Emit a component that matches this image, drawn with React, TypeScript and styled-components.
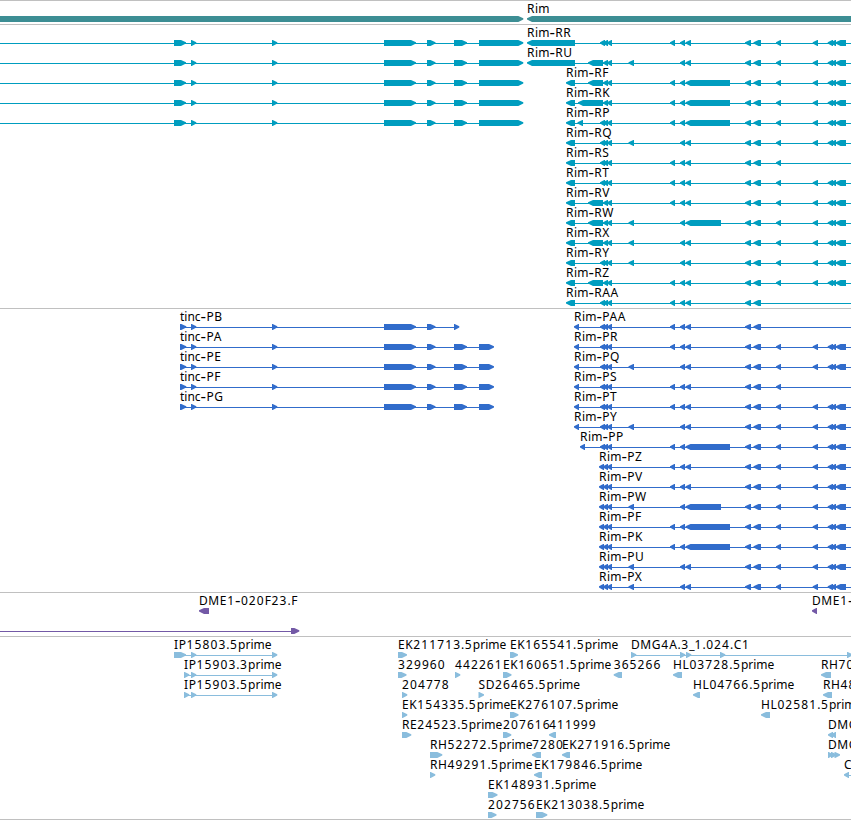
import React from 'react'
import styled, { createGlobalStyle } from 'styled-components'

type Span = [number, number]

type Feature = {
  label?: string
  at?: number
  dir: 'left' | 'right'
  line?: Span
  parts: Span[]
}

type Row = Feature[]

const WIDTH = 851

const colors = {
  gene: '#3d8e94',
  transcript: '#009dbf',
  protein: '#316ccb',
  clone: '#7359a6',
  est: '#8abddd',
}

// exons shared by most of the Rim isoforms
const utr: Span = [566, 575]
const triple: Span[] = [[600, 605], [603, 608], [607, 612]]
const long5: Span[] = [[588, 603], [603, 608], [607, 612]]
const longer5: Span[] = [[578, 603], [603, 608], [607, 612]]
const coding: Span[] = [[599, 604], [603, 608], [607, 612]]
const alt: Span = [628.5, 634]
const e1: Span = [670, 675]
const e2: Span = [680, 685]
const e3: Span = [685.5, 691]
const mid: Span = [685.5, 721]
const big: Span = [685.5, 730]
const pair: Span[] = [[745, 751], [753.5, 761]]
const e4: Span = [776, 781]
const tail: Span[] = [...pair, e4, [812.7, 818], [827.7, 833], [831, 836], [835.5, 846]]

const rim = (name: string, ...parts: Span[]): Feature => ({
  label: `Rim-${name}`,
  at: parts[0][0],
  dir: 'left',
  line: [parts[0][0] + 2, WIDTH],
  parts,
})

const tincExons: Span[] = [[191, 196.3], [272, 277.3], [384, 416], [427, 435.5]]

const tincR: Feature = {
  dir: 'right',
  line: [0, 520],
  parts: [[174, 186], ...tincExons, [454, 467], [479, 523.3]],
}

const tincP = (name: string, ...end: Span[]): Feature => ({
  label: `tinc-${name}`,
  at: 180,
  dir: 'right',
  line: [180, end[end.length - 1][1] - 2],
  parts: [[180, 186.3], ...tincExons, ...end],
})

const est = (label: string, from: number, to: number, dir: Feature['dir'] = 'right'): Feature => ({
  label,
  at: from,
  dir,
  parts: [[from, to]],
})

const ip = (label: string, from: number, to: number): Feature => ({
  label,
  at: from,
  dir: 'right',
  line: [from, 275],
  parts: [[from, to], [191, 196.3], [272, 277.3]],
})

const genes: Row[] = [
  [
    { dir: 'right', parts: [[-10, 523.3]] },
    { label: 'Rim', at: 527, dir: 'left', parts: [[527, 870]] },
  ],
]

const transcripts: Row[] = [
  [tincR, rim('RR', [527, 575], ...triple, e1, e2, e3, ...tail)],
  [tincR, rim('RU', [527, 575], ...long5, alt, e2, e3, ...tail)],
  [tincR, rim('RF', utr, ...long5, e1, e2, big, ...tail)],
  [tincR, rim('RK', utr, ...longer5, e1, e2, big, ...tail)],
  [tincR, rim('RP', utr, [577.5, 583], ...triple, e1, e2, big, ...tail)],
  [rim('RQ', utr, ...triple, alt, e2, e3, ...tail)],
  [rim('RS', utr, ...triple, e1, e2, e3, ...pair, e4)],
  [rim('RT', utr, ...triple, e1, e2, e3, ...tail)],
  [rim('RV', utr, ...long5, e1, e2, e3, ...tail)],
  [rim('RW', utr, ...long5, alt, e2, mid, ...tail)],
  [rim('RX', utr, ...long5, alt, e2, e3, ...tail)],
  [rim('RY', utr, ...triple, alt, e2, e3, ...tail)],
  [rim('RZ', utr, ...long5, e1, e2, e3, ...tail)],
  [rim('RAA', utr, ...triple, e1, e2, e3, ...pair)],
]

const start: Span = [574, 579]
const tincEnd: Span[] = [[454, 467], [479, 494]]

const proteins: Row[] = [
  [tincP('PB', [454, 459.3]), rim('PAA', start, ...triple, e1, e2, e3, ...pair)],
  [tincP('PA', ...tincEnd), rim('PR', start, ...triple, e1, e2, e3, ...tail)],
  [tincP('PE', ...tincEnd), rim('PQ', start, ...triple, alt, e2, e3, ...tail)],
  [tincP('PF', ...tincEnd), rim('PS', start, ...triple, e1, e2, e3, ...pair, e4)],
  [tincP('PG', ...tincEnd), rim('PT', start, ...triple, e1, e2, e3, ...tail)],
  [rim('PY', start, ...triple, alt, e2, e3, ...tail)],
  [rim('PP', [580, 585], ...triple, e1, e2, big, ...tail)],
  [rim('PZ', ...coding, e1, e2, e3, ...tail)],
  [rim('PV', ...coding, e1, e2, e3, ...tail)],
  [rim('PW', ...coding, alt, e2, mid, ...tail)],
  [rim('PF', ...coding, e1, e2, big, ...tail)],
  [rim('PK', ...coding, e1, e2, big, ...tail)],
  [rim('PU', ...coding, alt, e2, e3, ...tail)],
  [rim('PX', ...coding, alt, e2, e3, ...tail)],
]

const clones: Row[] = [
  [est('DME1-020F23.F', 199, 209, 'left'), est('DME1-', 812, 817, 'left')],
  [{ dir: 'right', line: [0, 296], parts: [[291, 299.3]] }],
]

const ests: Row[] = [
  [
    ip('IP15803.5prime', 174, 186),
    est('EK211713.5prime', 398, 407),
    est('EK165541.5prime', 510, 518),
    {
      label: 'DMG4A.3_1.024.C1',
      at: 631,
      dir: 'right',
      line: [631, WIDTH],
      parts: [[631, 636.3], [680, 685.3], [686, 691.3], [720, 725.3], [847, 852.3]],
    },
  ],
  [
    ip('IP15903.3prime', 184, 189.3),
    est('329960', 398, 406.5),
    est('442261', 455, 460.3),
    est('EK160651.5prime', 503, 511.5),
    est('365266', 613.7, 622, 'left'),
    est('HL03728.5prime', 673, 682, 'left'),
    est('RH70', 821, 831, 'left'),
  ],
  [
    ip('IP15903.5prime', 184, 189.3),
    est('204778', 402, 407.3),
    est('SD26465.5prime', 478.5, 484, 'right'),
    est('HL04766.5prime', 693, 700, 'left'),
    est('RH48', 823, 832, 'left'),
  ],
  [
    est('EK154335.5prime', 402, 407.3),
    est('EK276107.5prime', 510, 518.5),
    est('HL02581.5prime', 761, 770, 'left'),
  ],
  [
    est('RE24523.5prime', 402, 411.3),
    est('207616', 503, 511.3),
    est('411999', 549, 556, 'left'),
    { label: 'DMG', at: 828, dir: 'left', parts: [[828, 833], [831, 836]] },
  ],
  [
    est('RH52272.5prime', 430, 442.3),
    est('7280', 532, 541, 'left'),
    est('EK271916.5prime', 562, 570, 'left'),
    { label: 'DMG', at: 828, dir: 'right', parts: [[828, 833], [831, 836.5], [834.5, 840]] },
  ],
  [
    est('RH49291.5prime', 430, 435.3),
    est('EK179846.5prime', 534, 542, 'left'),
    { label: 'C', at: 844, dir: 'left', line: [846, WIDTH], parts: [[844, 849]] },
  ],
  [est('EK148931.5prime', 488, 497.5)],
  [est('202756', 488, 496.5), est('EK213038.5prime', 536, 547.3)],
]

// blunt arrow head, six pixels high
function arrow([x1, x2]: Span, dir: Feature['dir']) {
  const tip = Math.min(5, x2 - x1 - 0.7)
  return dir === 'right'
    ? `${x1},0 ${x2 - tip},0 ${x2},2.2 ${x2},3.6 ${x2 - tip},6 ${x1},6`
    : `${x2},0 ${x1 + tip},0 ${x1},2.2 ${x1},3.6 ${x1 + tip},6 ${x2},6`
}

// digits share one wide advance, capitals are loosely set
function tracking(run: string) {
  if (/\d/.test(run)) return 1.1
  if (run === '-') return 0.3
  if (run === '.') return 0.5
  return /[A-Z]/.test(run) ? 0.6 : 0
}

function Name({ text }: { text: string }) {
  const runs = text.match(/\d+|[A-Z]+|[a-z]+|[^\dA-Za-z]/g) || []
  return (
    <>
      {runs.map((run, i) => (
        <Run key={i} $tracking={tracking(run)} $wide={run === '-'}>
          {run}
        </Run>
      ))}
    </>
  )
}

function Track({ rows, color }: { rows: Row[]; color: string }) {
  return (
    <TrackPanel>
      {rows.map((row, i) => (
        <TrackRow key={i}>
          <Labels>
            {row.map(
              (f, j) =>
                f.label && (
                  <Label key={j} style={{ left: f.at }}>
                    <Name text={f.label} />
                  </Label>
                ),
            )}
          </Labels>
          <Glyphs width={WIDTH} height={6} fill={color}>
            {row.map((f, j) => (
              <g key={j}>
                {f.line && <rect x={f.line[0]} y={3} width={f.line[1] - f.line[0]} height={1} />}
                {f.parts.map((part, k) => (
                  <polygon key={k} points={arrow(part, f.dir)} />
                ))}
              </g>
            ))}
          </Glyphs>
        </TrackRow>
      ))}
    </TrackPanel>
  )
}

export default function App() {
  return (
    <>
      <GlobalStyle />
      <Browser>
        <Track rows={genes} color={colors.gene} />
        <Track rows={transcripts} color={colors.transcript} />
        <Track rows={proteins} color={colors.protein} />
        <Track rows={clones} color={colors.clone} />
        <Track rows={ests} color={colors.est} />
      </Browser>
    </>
  )
}

const GlobalStyle = createGlobalStyle`
  body {
    margin: 0;
    background: #fff;
  }
`

const Browser = styled.main`
  width: ${WIDTH}px;
  height: 820px;
  overflow: hidden;
  color: #000;
  font-family: 'Noto Sans', 'DejaVu Sans', sans-serif;
  font-size: 12px;
`

const TrackPanel = styled.section`
  padding-bottom: 3px;
  border-top: 1px solid #c0c0c0;

  &:last-child {
    padding-bottom: 2px;
    border-bottom: 1px solid #c0c0c0;
  }
`

const TrackRow = styled.div`
  display: flex;
  flex-direction: column;
  height: 20px;
`

const Labels = styled.div`
  position: relative;
  flex: 0 0 15px;
`

const Label = styled.span`
  position: absolute;
  top: 0;
  line-height: 16px;
  white-space: nowrap;
`

const Run = styled.span<{ $tracking: number; $wide: boolean }>`
  letter-spacing: ${(p) => p.$tracking}px;
  ${(p) => p.$wide && 'font-size: 17px; line-height: 0; vertical-align: -1px;'}
`

const Glyphs = styled.svg`
  display: block;
  flex: none;
  overflow: visible;
`
